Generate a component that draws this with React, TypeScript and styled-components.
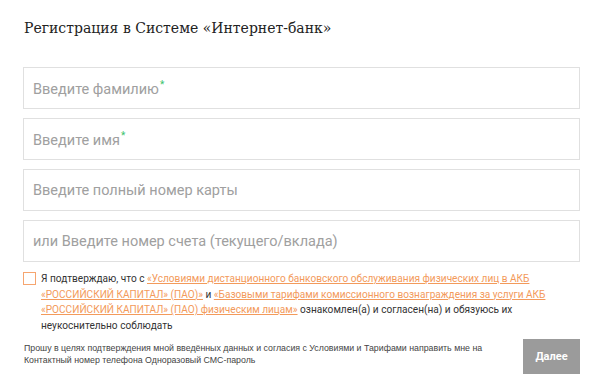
import { createGlobalStyle } from "styled-components"
import styled from "styled-components"

const GlobalStyle = createGlobalStyle`
  body {
    margin: 0;
    background: #fff;
    font-family: Roboto, "Noto Sans", sans-serif;
  }
`

const fields = [
  { placeholder: "Введите фамилию", required: true },
  { placeholder: "Введите имя", required: true },
  { placeholder: "Введите полный номер карты", required: false },
  { placeholder: "или Введите номер счета (текущего/вклада)", required: false },
]

export default function App() {
  return (
    <>
      <GlobalStyle />
      <Page>
        <Title>Регистрация в Системе «Интернет-банк»</Title>
        <Fields>
          {fields.map((f) => (
            <Field key={f.placeholder}>
              <Placeholder>
                {f.placeholder}
                {f.required && <Star>*</Star>}
              </Placeholder>
            </Field>
          ))}
        </Fields>
        <Agreement>
          <Checkbox type="checkbox" />
          <AgreementText>
            Я подтверждаю, что с{" "}
            <OrangeLink href="#">
              «Условиями дистанционного банковского обслуживания физических лиц в АКБ
              «РОССИЙСКИЙ КАПИТАЛ» (ПАО)»
            </OrangeLink>{" "}
            и{" "}
            <OrangeLink href="#">
              «Базовыми тарифами комиссионного вознаграждения за услуги АКБ «РОССИЙСКИЙ
              КАПИТАЛ» (ПАО) физическим лицам»
            </OrangeLink>{" "}
            ознакомлен(а) и согласен(на) и обязуюсь их неукоснительно соблюдать
          </AgreementText>
        </Agreement>
        <Footer>
          <SmsNote>
            Прошу в целях подтверждения мной введённых данных и согласия с Условиями и
            Тарифами направить мне на Контактный номер телефона Одноразовый СМС-пароль
          </SmsNote>
          <NextButton type="button">Далее</NextButton>
        </Footer>
      </Page>
    </>
  )
}

const Page = styled.div`
  width: 557px;
  padding: 18px 0 0 23px;
  box-sizing: content-box;
`
const Title = styled.h1`
  font-family: "DejaVu Serif", serif;
  font-weight: normal;
  font-size: 14px;
  color: #222;
  margin: 0 0 29px 1px;
  line-height: 20px;
`
const Fields = styled.div`
  display: flex;
  flex-direction: column;
  gap: 9px;
`
const Field = styled.div`
  height: 42px;
  border: 1px solid #e0e0e0;
  box-sizing: border-box;
  display: flex;
  align-items: center;
  padding-left: 9px;
`
const Placeholder = styled.span`
  font-size: 14.5px;
  color: #a0a0a0;
`
const Star = styled.sup`
  color: #3cc36a;
  font-size: 10px;
  margin-left: 1px;
`
const Agreement = styled.div`
  display: flex;
  align-items: flex-start;
  gap: 5px;
  margin-top: 9px;
`
const Checkbox = styled.input`
  appearance: none;
  width: 13px;
  height: 13px;
  margin: 1px 0 0 0;
  flex-shrink: 0;
  border: 1px solid #f6a56f;
  box-sizing: border-box;
  background: #fff;
`
const AgreementText = styled.p`
  margin: 0;
  font-size: 10.1px;
  line-height: 15.5px;
  color: #333;
  width: 512px;
`
const OrangeLink = styled.a`
  color: #f39a5b;
  text-decoration: underline;
`
const Footer = styled.div`
  display: flex;
  justify-content: space-between;
  align-items: flex-start;
  margin-top: 6px;
`
const SmsNote = styled.p`
  margin: 4px 0 0 1px;
  font-family: "Liberation Sans", Arial, sans-serif;
  font-size: 8.8px;
  line-height: 11.5px;
  color: #444;
  width: 472px;
`
const NextButton = styled.button`
  width: 57px;
  height: 35px;
  border: none;
  background: #9b9b9b;
  color: #fff;
  font-family: Roboto, sans-serif;
  font-weight: bold;
  font-size: 11px;
`
